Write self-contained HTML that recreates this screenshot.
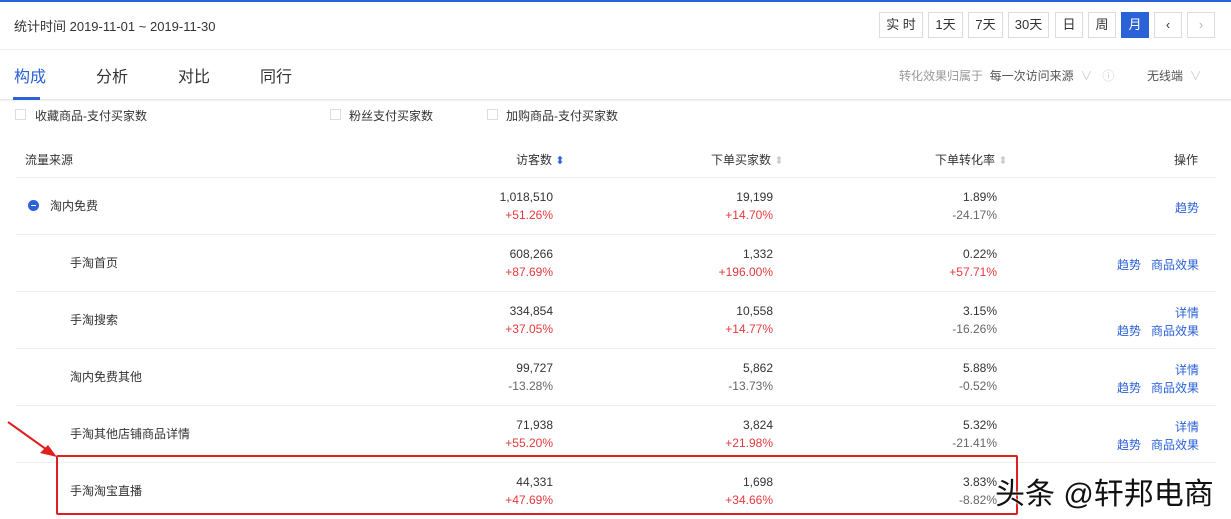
<!DOCTYPE html><html><head><meta charset="utf-8"><style>
*{margin:0;padding:0;box-sizing:border-box}
body{width:1231px;height:519px;overflow:hidden;background:#fff;font-family:"Liberation Sans","Noto Sans CJK SC",sans-serif;font-size:12px;color:#333;position:relative}
.a{position:absolute;white-space:nowrap}
.btn{position:absolute;top:12px;height:26px;border:1px solid #ddd;font-size:13px;line-height:24px;text-align:center;color:#333}
.r{text-align:right}
.red{color:#e4393c}.gr{color:#666}
.blue{color:#2b62d8}
.line{position:absolute;left:16px;width:1200px;height:1px;background:#eee}
.cb{position:absolute;width:11px;height:11px;border:1px solid #ddd;top:109px}
.s{font-size:11px;letter-spacing:0}
</style></head><body>
<div class="a" style="left:0;top:0;width:1231px;height:2px;background:#2b62d8"></div>
<div class="a" style="left:14px;top:16px;font-size:13px">统计时间 2019-11-01 ~ 2019-11-30</div>
<div class="btn" style="left:879px;width:44px">实 时</div>
<div class="btn" style="left:928px;width:35px">1天</div>
<div class="btn" style="left:968px;width:35px">7天</div>
<div class="btn" style="left:1008px;width:41px">30天</div>
<div class="btn" style="left:1055px;width:28px">日</div>
<div class="btn" style="left:1088px;width:28px">周</div>
<div class="btn" style="left:1121px;width:28px;background:#2b62d8;border-color:#2b62d8;color:#fff">月</div>
<div class="btn" style="left:1154px;width:28px">‹</div>
<div class="btn" style="left:1187px;width:28px;color:#bbb">›</div>
<div class="a" style="left:0;top:49px;width:1231px;height:1px;background:#eee"></div>
<div class="a" style="left:0;top:99px;width:1231px;height:3px;background:linear-gradient(#e6e6e6,#fff)"></div>
<div class="a blue" style="left:14px;top:63px;font-size:16px">构成</div>
<div class="a" style="left:13px;top:97px;width:27px;height:3px;background:#2b62d8"></div>
<div class="a" style="left:96px;top:63px;font-size:16px">分析</div>
<div class="a" style="left:178px;top:63px;font-size:16px">对比</div>
<div class="a" style="left:260px;top:63px;font-size:16px">同行</div>
<div class="a" style="left:899px;top:67px;color:#999">转化效果归属于&nbsp;&nbsp;<span style="color:#555">每一次访问来源</span> <span style="color:#ccc">&nbsp;∨&nbsp;&nbsp;&nbsp;ⓘ</span></div>
<div class="a" style="left:1147px;top:67px;color:#555">无线端 <span style="color:#ccc">&nbsp;∨</span></div>
<div class="cb" style="left:15px"></div><div class="a" style="left:35px;top:107px">收藏商品-支付买家数</div>
<div class="cb" style="left:330px"></div><div class="a" style="left:349px;top:107px">粉丝支付买家数</div>
<div class="cb" style="left:487px"></div><div class="a" style="left:506px;top:107px">加购商品-支付买家数</div>
<div class="a" style="left:25px;top:151px">流量来源</div>
<div class="a" style="left:516px;top:151px">访客数 <span class="s" style="color:#2b62d8">⬍</span></div>
<div class="a" style="left:711px;top:151px">下单买家数 <span class="s" style="color:#ccc">⬍</span></div>
<div class="a" style="left:935px;top:151px">下单转化率 <span class="s" style="color:#ccc">⬍</span></div>
<div class="a" style="left:1174px;top:151px">操作</div>
<div class="line" style="top:177px"></div>
<div id="rows"></div>
<script>
var d=[["淘内免费","1,018,510","+51.26%","19,199","+14.70%","1.89%","-24.17%",0,30],
["手淘首页","608,266","+87.69%","1,332","+196.00%","0.22%","+57.71%",1,70],
["手淘搜索","334,854","+37.05%","10,558","+14.77%","3.15%","-16.26%",2,70],
["淘内免费其他","99,727","-13.28%","5,862","-13.73%","5.88%","-0.52%",2,70],
["手淘其他店铺商品详情","71,938","+55.20%","3,824","+21.98%","5.32%","-21.41%",2,70],
["手淘淘宝直播","44,331","+47.69%","1,698","+34.66%","3.83%","-8.82%",3,70]];
var h="";d.forEach(function(r,i){var y=178+i*57;
function n(x,v,c,t){return '<div class="a r '+c+'" style="right:'+(1231-x)+'px;top:'+t+'px">'+v+'</div>'}
function cl(v){return v[0]=="+"?"red":"gr"}
h+='<div class="a" style="left:'+(r[8]+(i==0?20:0))+'px;top:'+(y+19)+'px">'+r[0]+'</div>';
if(i==0)h+='<div class="a" style="left:28px;top:'+(y+22)+'px;width:11px;height:11px;border-radius:50%;background:#2b62d8"><div style="margin:5px 3px;width:5px;height:1px;background:#fff"></div></div>';
h+=n(553,r[1],"",y+12)+n(553,r[2],cl(r[2]),y+30)+n(773,r[3],"",y+12)+n(773,r[4],cl(r[4]),y+30)+n(997,r[5],"",y+12)+n(997,r[6],cl(r[6]),y+30);
if(r[7]==0)h+=n(1199,"趋势","blue",y+21);
if(r[7]==1)h+=n(1199,"趋势&nbsp;&nbsp;&nbsp;商品效果","blue",y+21);
if(r[7]==2)h+=n(1199,"详情","blue",y+12)+n(1199,"趋势&nbsp;&nbsp;&nbsp;商品效果","blue",y+30);
if(i<5)h+='<div class="line" style="top:'+(y+56)+'px"></div>';});
document.getElementById("rows").innerHTML=h;
</script>
<div class="a" style="left:56px;top:455px;width:962px;height:60px;border:2px solid #e02020;border-radius:2px"></div>
<svg class="a" style="left:0;top:415px" width="70" height="50"><line x1="8" y1="7" x2="50" y2="37" stroke="#e02020" stroke-width="2"/><polygon points="57,42 40,38 48,30" fill="#e02020"/></svg>
<div class="a" style="left:995px;top:469px;font-size:30px;color:#111;text-shadow:0 0 2px #fff,0 0 2px #fff">头条 @轩邦电商</div>
</body></html>
